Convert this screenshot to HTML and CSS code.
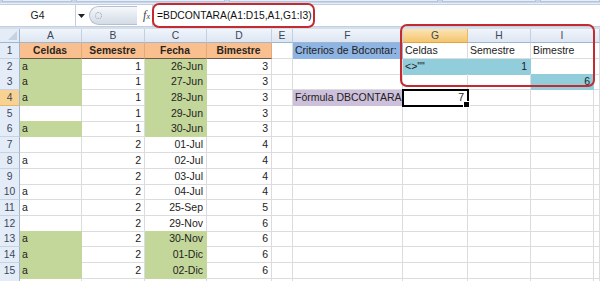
FILE: index.html
```html
<!DOCTYPE html>
<html>
<head>
<meta charset="utf-8">
<link rel="stylesheet" href="styles.css">
</head>
<body>
<div class="app">
  <div class="ribbon">
    <span class="seg seg1"></span><span class="seg seg2"></span><span class="seg seg3"></span><span class="seg seg4"></span><span class="seg seg5"></span>
  </div>
  <div class="fbar">
    <div class="namebox">G4</div>
    <div class="nb-arrow"><svg width="7" height="4" viewBox="0 0 7 4"><path d="M0 0H7L3.5 4Z" fill="#222"/></svg></div>
    <div class="pill">
      <span class="knob"></span>
      <span class="fx">f<span class="fxs">x</span></span>
    </div>
    <div class="finput">=BDCONTARA(A1:D15,A1,G1:I3)</div>
  </div>
  <div class="sheet">
    <div class="row hdr">
      <div class="corner"><svg width="9" height="9" viewBox="0 0 9 9"><path d="M9 0V9H0Z" fill="#c7d2e0"/></svg></div>
      <div class="ch">A</div><div class="ch">B</div><div class="ch">C</div><div class="ch">D</div><div class="ch">E</div><div class="ch">F</div><div class="ch ch-sel">G</div><div class="ch">H</div><div class="ch">I</div><div class="ch"></div>
    </div>
    <div class="row">
      <div class="rh">1</div>
      <div class="c o">Celdas</div><div class="c o">Semestre</div><div class="c o">Fecha</div><div class="c o">Bimestre</div>
      <div class="c"></div><div class="c b">Criterios de Bdcontar:</div><div class="c">Celdas</div><div class="c">Semestre</div><div class="c">Bimestre</div><div class="c"></div>
    </div>
    <div class="row">
      <div class="rh">2</div>
      <div class="c g">a</div><div class="c r">1</div><div class="c r g">26-Jun</div><div class="c r">3</div>
      <div class="c"></div><div class="c"></div><div class="c t">&lt;&gt;""</div><div class="c r t">1</div><div class="c"></div><div class="c"></div>
    </div>
    <div class="row">
      <div class="rh">3</div>
      <div class="c g">a</div><div class="c r">1</div><div class="c r g">27-Jun</div><div class="c r">3</div>
      <div class="c"></div><div class="c"></div><div class="c"></div><div class="c"></div><div class="c r t">6</div><div class="c"></div>
    </div>
    <div class="row">
      <div class="rh rh-sel">4</div>
      <div class="c g">a</div><div class="c r">1</div><div class="c r g">28-Jun</div><div class="c r">3</div>
      <div class="c"></div><div class="c l">Fórmula DBCONTARA</div><div class="c r sel">7</div><div class="c"></div><div class="c"></div><div class="c"></div>
    </div>
    <div class="row">
      <div class="rh">5</div>
      <div class="c"></div><div class="c r">1</div><div class="c r g">29-Jun</div><div class="c r">3</div>
      <div class="c"></div><div class="c"></div><div class="c"></div><div class="c"></div><div class="c"></div><div class="c"></div>
    </div>
    <div class="row">
      <div class="rh">6</div>
      <div class="c g">a</div><div class="c r">1</div><div class="c r g">30-Jun</div><div class="c r">3</div>
      <div class="c"></div><div class="c"></div><div class="c"></div><div class="c"></div><div class="c"></div><div class="c"></div>
    </div>
    <div class="row">
      <div class="rh">7</div>
      <div class="c"></div><div class="c r">2</div><div class="c r">01-Jul</div><div class="c r">4</div>
      <div class="c"></div><div class="c"></div><div class="c"></div><div class="c"></div><div class="c"></div><div class="c"></div>
    </div>
    <div class="row">
      <div class="rh">8</div>
      <div class="c">a</div><div class="c r">2</div><div class="c r">02-Jul</div><div class="c r">4</div>
      <div class="c"></div><div class="c"></div><div class="c"></div><div class="c"></div><div class="c"></div><div class="c"></div>
    </div>
    <div class="row">
      <div class="rh">9</div>
      <div class="c"></div><div class="c r">2</div><div class="c r">03-Jul</div><div class="c r">4</div>
      <div class="c"></div><div class="c"></div><div class="c"></div><div class="c"></div><div class="c"></div><div class="c"></div>
    </div>
    <div class="row">
      <div class="rh">10</div>
      <div class="c">a</div><div class="c r">2</div><div class="c r">04-Jul</div><div class="c r">4</div>
      <div class="c"></div><div class="c"></div><div class="c"></div><div class="c"></div><div class="c"></div><div class="c"></div>
    </div>
    <div class="row">
      <div class="rh">11</div>
      <div class="c">a</div><div class="c r">2</div><div class="c r">25-Sep</div><div class="c r">5</div>
      <div class="c"></div><div class="c"></div><div class="c"></div><div class="c"></div><div class="c"></div><div class="c"></div>
    </div>
    <div class="row">
      <div class="rh">12</div>
      <div class="c"></div><div class="c r">2</div><div class="c r">29-Nov</div><div class="c r">6</div>
      <div class="c"></div><div class="c"></div><div class="c"></div><div class="c"></div><div class="c"></div><div class="c"></div>
    </div>
    <div class="row">
      <div class="rh">13</div>
      <div class="c g">a</div><div class="c r">2</div><div class="c r g">30-Nov</div><div class="c r">6</div>
      <div class="c"></div><div class="c"></div><div class="c"></div><div class="c"></div><div class="c"></div><div class="c"></div>
    </div>
    <div class="row">
      <div class="rh">14</div>
      <div class="c g">a</div><div class="c r">2</div><div class="c r g">01-Dic</div><div class="c r">6</div>
      <div class="c"></div><div class="c"></div><div class="c"></div><div class="c"></div><div class="c"></div><div class="c"></div>
    </div>
    <div class="row">
      <div class="rh">15</div>
      <div class="c g">a</div><div class="c r">2</div><div class="c r g">02-Dic</div><div class="c r">6</div>
      <div class="c"></div><div class="c"></div><div class="c"></div><div class="c"></div><div class="c"></div><div class="c"></div>
    </div>
    <div class="row">
      <div class="rh"></div>
      <div class="c"></div><div class="c"></div><div class="c"></div><div class="c"></div>
      <div class="c"></div><div class="c"></div><div class="c"></div><div class="c"></div><div class="c"></div><div class="c"></div>
    </div>
  </div>
  <div class="hl hl-formula"></div>
  <div class="hl hl-crit"></div>
</div>
</body>
</html>
```

FILE: styles.css
```css
* { box-sizing: border-box; }
html, body { margin: 0; padding: 0; }
body {
  width: 600px;
  height: 281px;
  overflow: hidden;
  background: #fff;
  font-family: "Liberation Sans", Arial, sans-serif;
  color: #222;
}
.app { position: relative; width: 600px; height: 281px; overflow: hidden; }

.ribbon {
  height: 3px;
  background: #c6d5ea;
  display: flex;
  gap: 4px;
  padding-left: 2px;
}
.seg { height: 2px; background: #e6eef9; border: 1px solid #b3c5dd; border-top: 0; }
.seg1 { width: 70px; }
.seg2 { width: 150px; }
.seg3 { width: 210px; }
.seg4 { width: 95px; }
.seg5 { width: 60px; }

.fbar {
  height: 26px;
  display: flex;
  align-items: stretch;
  background: #e9eef6;
  border-bottom: 2px solid #d5dfec;
  padding-top: 1px;
}
.namebox {
  width: 76px;
  background: #fff;
  border: 1px solid #c3cfdf;
  border-left: 0;
  font-size: 10.5px;
  line-height: 21px;
  text-align: center;
  color: #222;
}
.nb-arrow {
  width: 10px;
  display: flex;
  align-items: center;
  justify-content: center;
  background: #fff;
  border-top: 1px solid #c3cfdf;
  border-bottom: 1px solid #c3cfdf;
}
.pill {
  width: 66px;
  display: flex;
  align-items: center;
  justify-content: space-between;
  padding: 0 2px 0 3px;
  background: #fff;
  border-top: 1px solid #c3cfdf;
  border-bottom: 1px solid #c3cfdf;
}
.knob {
  width: 48px;
  height: 19px;
  border-radius: 10px 0 0 10px;
  background: linear-gradient(#f6f8fb, #d3dbe5);
  border: 1px solid #b6c0cc;
  border-right: 0;
  position: relative;
}
.knob::after {
  content: "";
  position: absolute;
  left: 5px;
  top: 5px;
  width: 5px;
  height: 5px;
  border-radius: 50%;
  border: 1px dotted #9aa4b1;
}
.fx {
  font-family: "Liberation Serif", "Times New Roman", serif;
  font-style: italic;
  font-size: 12px;
  color: #444;
}
.fxs { font-size: 8px; }
.finput {
  flex: 1;
  background: #fff;
  border: 1px solid #c3cfdf;
  border-right: 0;
  font-size: 10.3px;
  line-height: 21px;
  padding-left: 4px;
  color: #111;
}

.sheet { display: flex; flex-direction: column; }
.row {
  display: grid;
  grid-template-columns: 20px 62px 63px 62px 65px 21px 110px 65px 63px 63px 6px;
  height: 15.7px;
  flex: none;
}
.row.hdr { height: 14px; }

.corner {
  background: #e4ecf7;
  border-right: 1px solid #9eb6ce;
  border-bottom: 1px solid #9eb6ce;
  display: flex;
  align-items: flex-end;
  justify-content: flex-end;
  padding: 0 2px 2px 0;
}
.ch {
  background: linear-gradient(#f1f5fb, #dde6f2);
  border-right: 1px solid #c3d0e1;
  border-bottom: 1px solid #9eb6ce;
  font-size: 10.3px;
  line-height: 13px;
  text-align: center;
  color: #3a4759;
}
.ch-sel {
  background: linear-gradient(#fbe3b4, #f4c66e);
  border-right-color: #f0b85a;
  border-bottom-color: #e6a23c;
}
.rh {
  background: #e4ecf7;
  border-right: 1px solid #9eb6ce;
  border-bottom: 1px solid #c5d3e3;
  font-size: 10.3px;
  line-height: 15px;
  text-align: center;
  color: #3a4759;
}
.rh-sel { background: #f8d292; border-bottom-color: #eab865; }

.c {
  border-right: 1px solid #dadcdd;
  border-bottom: 1px solid #dadcdd;
  font-size: 10.5px;
  line-height: 15px;
  padding: 0 3px 0 2px;
  white-space: nowrap;
  overflow: visible;
}
.c.r { text-align: right; }
.c.g { background: #c4d79b; border-color: #c4d79b; }
.c.t { background: #92cddc; border-color: #92cddc; }
.c.o {
  background: #fabf8f;
  font-weight: bold;
  font-size: 10.3px;
  text-align: center;
  color: #2a2520;
  border-right: 1px solid #e3a978;
  border-bottom: 1px solid #6b5a48;
}
.c.b { background: #8db4e2; border-color: #8db4e2; }
.c.l { background: #ccc0da; border-color: #ccc0da; }
.c.sel {
  position: relative;
  outline: 2px solid #000;
  outline-offset: -1px;
  z-index: 1;
}
.c.sel::after {
  content: "";
  position: absolute;
  right: -3px;
  bottom: -3px;
  width: 5px;
  height: 5px;
  background: #000;
  border: 1px solid #fff;
}

.hl {
  position: absolute;
  border: 2px solid #c32b30;
  border-radius: 7px;
  pointer-events: none;
  z-index: 2;
}
.hl-formula { left: 152px; top: 3px; width: 163px; height: 25px; }
.hl-crit { left: 400px; top: 24px; width: 195px; height: 63px; }
```
